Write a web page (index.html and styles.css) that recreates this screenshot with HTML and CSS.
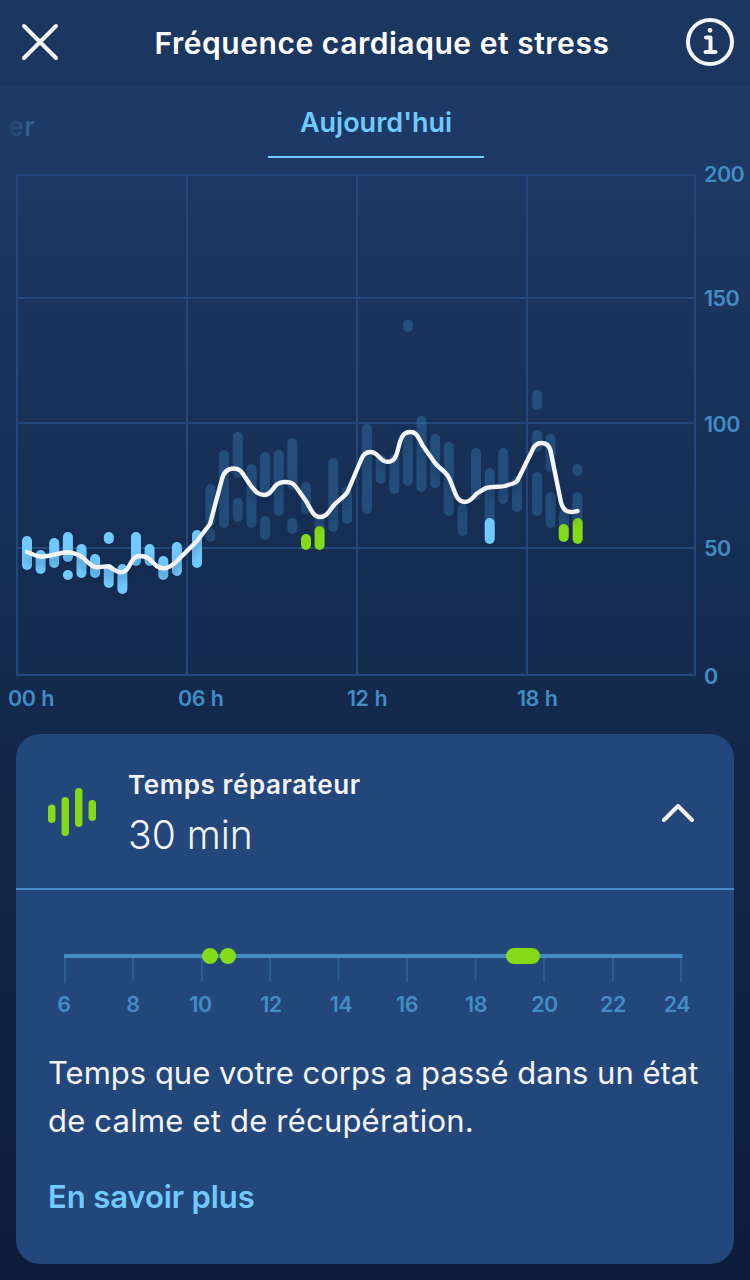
FILE: index.html
```
<!DOCTYPE html>
<html lang="fr">
<head>
    <meta charset="UTF-8">
    <meta name="viewport" content="width=device-width, initial-scale=1.0">
    <title>Fréquence cardiaque et stress</title>
    <link rel="stylesheet" href="styles.css">
</head>
<body>
    <header class="header">
        <button class="icon-button" aria-label="Fermer">
            <svg width="48" height="48" viewBox="0 0 48 48"><path class="icon-stroke" d="M12 8 L44 40 M44 8 L12 40"/></svg>
        </button>
        <h1 class="title">Fréquence cardiaque et stress</h1>
        <button class="icon-button" aria-label="Informations">
            <svg width="48" height="48" viewBox="0 0 48 48">
                <circle class="icon-stroke" cx="24" cy="24" r="22"/>
                <circle class="icon-dot" cx="24" cy="12.3" r="2.4"/>
                <path class="icon-stroke" d="M20 19.5 H24.5 V34 M19.5 34 H29.5"/>
            </svg>
        </button>
    </header>

    <nav class="tabs">
        <span class="tab-prev">er</span>
        <span class="tab active">Aujourd'hui</span>
    </nav>

    <svg class="chart" width="750" height="574" viewBox="0 160 750 574">
        <g class="grid">
            <path d="M17 175 H695 V675 H17 Z"/>
            <path d="M17 298 H695 M17 423 H695 M17 548 H695"/>
            <path d="M187 175 V675 M357 175 V675 M527 175 V675"/>
        </g>
        <g id="bars"></g>
        <path class="curve" d="M27 552 C32 554 37 556.7 42 556.7 C50 556.5 60 552.5 67.5 552.3 C73 552.5 77 554 82 557 C88 561 90 567 97 567.3 C101 567.3 104 566 108 566.5 C113 567.5 115 572.3 121 572.3 C131 572.3 129 556 140 556 C153 556 152 568.3 164 568.3 C169 568.3 173 565 177 561 L197 541 L210 524 L222 479 C224 471 228 468.5 234 468.5 C240 468.5 242 472 245 477 L251 486 C255 491 258 495 264 495 C274 495 272 482 284.5 482 C291 482 293 483 296 487 L306 501 C311 509 313 517 320 517 C327 517 329 511 334 505 C338 501 345 496 347.5 492 L361 460 C363 454 366 452 370.5 452 C379 452 379 461.8 387.500 461.8 C403 461.8 394 432 410.5 432 C418 432 419 440 423 446 L435 463 C440 469 446 472 448.5 477 C455 489 455 502 465 502 C472 502 474 494 480 491.5 L486 488 C494 486 500 487.5 505 486 C510 484 515 484 517.5 480.5 L532 451 C534 445 538 443 541.5 443 C546 443 550 446 551 453 L560.5 500 C562 509 566 512 571 512 C574 512 575 511.5 577.5 511"/>
        <g class="axis-text">
            <text x="704" y="182">200</text>
            <text x="704" y="306">150</text>
            <text x="704" y="432">100</text>
            <text x="704" y="556">50</text>
            <text x="704" y="684">0</text>
            <text x="8" y="706">00 h</text>
            <text x="178" y="706">06 h</text>
            <text x="347" y="706">12 h</text>
            <text x="517" y="706">18 h</text>
        </g>
    </svg>

    <section class="card">
        <div class="card-head">
            <svg class="card-icon" width="48" height="48" viewBox="0 0 48 48">
                <rect x="0" y="16.5" width="7.5" height="18.5" rx="3.75"/>
                <rect x="13.5" y="9" width="7.5" height="39" rx="3.75"/>
                <rect x="27" y="0" width="7.5" height="39" rx="3.75"/>
                <rect x="40.5" y="12" width="7.5" height="21" rx="3.75"/>
            </svg>
            <div class="card-label">
                <h2>Temps réparateur</h2>
                <p class="value">30 min</p>
            </div>
            <svg width="32" height="20" viewBox="0 0 32 20"><path class="icon-stroke" d="M2 18 L16 4 L30 18"/></svg>
        </div>
        <svg class="timeline" width="718" height="136" viewBox="16 890 718 136">
            <path class="ticks" d="M65 956 V983 M133 956 V981 M202 956 V982 M270 956 V982 M338.5 956 V981 M407 956 V982 M475.5 956 V981 M544 956 V982 M613 956 V982 M681 956 V982"/>
            <path class="track" d="M64 956 H682.5"/>
            <g class="recovery">
                <circle cx="210" cy="956" r="8"/>
                <circle cx="228" cy="956" r="8"/>
                <rect x="506" y="948" width="34" height="16" rx="8"/>
            </g>
            <g class="axis-text centered">
                <text x="64" y="1012">6</text>
                <text x="133" y="1012">8</text>
                <text x="200.5" y="1012">10</text>
                <text x="271" y="1012">12</text>
                <text x="341" y="1012">14</text>
                <text x="407" y="1012">16</text>
                <text x="476" y="1012">18</text>
                <text x="544.5" y="1012">20</text>
                <text x="613" y="1012">22</text>
                <text x="677" y="1012">24</text>
            </g>
        </svg>
        <div class="card-body">
            <p>Temps que votre corps a passé dans un état <span class="last-line">de calme et de récupération.</span></p>
            <a class="more" href="#">En savoir plus</a>
        </div>
    </section>

    <script src="chart.js"></script>
</body>
</html>
```
FILE: styles.css
```
* {
    box-sizing: border-box;
}

body {
    font-family: Inter, "Liberation Sans", sans-serif;
    margin: 0;
    width: 750px;
    height: 1280px;
    overflow: hidden;
    background: linear-gradient(#1f3d6b, #172f56 500px, #13284a 740px, #0c1d3a);
    color: #f4f4f6;
}

h1, h2, p {
    margin: 0;
}

/* Header */
.header {
    display: flex;
    align-items: center;
    justify-content: space-between;
    height: 86px;
    padding: 0 16px 2px 12px;
    background-color: #1b365f;
}

.icon-button {
    width: 48px;
    height: 48px;
    padding: 0;
    border: none;
    background: none;
}

.icon-stroke {
    fill: none;
    stroke: #f4f4f6;
    stroke-width: 4;
    stroke-linecap: round;
    stroke-linejoin: round;
}

.icon-dot {
    fill: #f4f4f6;
}

.title {
    font-size: 30px;
    font-weight: 600;
    letter-spacing: 0.54px;
    color: #fff;
    padding: 2px 0 0 18px;
}

/* Day tabs */
.tabs {
    display: grid;
    grid-template-columns: 268px 216px;
    height: 74px;
    font-size: 27px;
    font-weight: 600;
}

.tab-prev {
    padding: 24px 0 0 8px;
    background: linear-gradient(90deg, #1f4068 8px, #3a76a4 42px);
    background-clip: text;
    -webkit-background-clip: text;
    color: transparent;
}

.tab {
    height: 72px;
    padding-top: 20px;
    text-align: center;
    color: #70caff;
    border-bottom: 2px solid #70caff;
}

/* Heart rate chart */
.chart,
.timeline {
    display: block;
}

.grid path {
    fill: none;
    stroke: #24477c;
    stroke-width: 2;
}

.bar-rest {
    fill: #70caff;
}

.bar-active {
    fill: #3a83b8;
    fill-opacity: 0.37;
}

.bar-recovery {
    fill: #84da17;
}

.curve {
    fill: none;
    stroke: #f4f4f6;
    stroke-width: 4.4;
    stroke-linecap: round;
    stroke-linejoin: round;
    filter: drop-shadow(0 6px 4px rgba(16, 38, 70, 0.4));
}

.axis-text {
    font-size: 21.5px;
    font-weight: 600;
    letter-spacing: -0.5px;
    word-spacing: 1px;
    fill: #428dc5;
}

.centered {
    text-anchor: middle;
}

/* Card */
.card {
    height: 530px;
    margin: 0 16px;
    border-radius: 24px;
    background-color: #23477a;
}

.card-head {
    display: flex;
    align-items: center;
    height: 156px;
    padding: 2px 40px 0 32px;
    border-bottom: 2px solid #428dc5;
}

.card-icon {
    fill: #84da17;
}

.card-label {
    flex: 1;
    padding: 7px 0 0 32px;
}

.card-label h2 {
    font-size: 26px;
    font-weight: 600;
    line-height: 38px;
    letter-spacing: 0.6px;
}

.value {
    font-size: 39px;
    font-weight: 350;
    line-height: 61px;
}

.ticks {
    stroke: #2c5c92;
    stroke-width: 2;
}

.track {
    stroke: #428dc5;
    stroke-width: 4;
}

.recovery {
    fill: #84da17;
}

.card-body {
    padding: 23px 32px 0;
    font-size: 31px;
    line-height: 48px;
}

.last-line {
    letter-spacing: 0.2px;
}

.more {
    display: inline-block;
    margin-top: 28px;
    font-weight: 600;
    letter-spacing: -0.1px;
    color: #70caff;
    text-decoration: none;
}
```
FILE: chart.js
```
// [x center, top, bottom]
const bars = {
    active: [
        [210.5, 484, 526], [210.5, 528, 542], [224, 450, 528], [237.8, 432, 478], [237.8, 498, 522],
        [251.5, 464, 528], [265, 452, 496], [265, 516, 540], [278.7, 450, 516], [292.3, 438, 490],
        [292.3, 518, 534], [306, 482, 514], [319.6, 516, 540], [333.3, 458, 532], [347, 486, 524],
        [367, 424, 514], [380.6, 454, 484], [394.3, 454, 494], [407.9, 320, 332], [407.9, 430, 486],
        [421.5, 416, 492], [435.2, 434, 488], [448.8, 442, 516], [462.4, 504, 536], [476, 448, 500],
        [489.7, 468, 540], [503.3, 448, 504], [517, 476, 512], [537, 390, 410], [537, 430, 452],
        [537, 472, 516], [550.5, 434, 472], [550.5, 492, 528], [564, 510, 540], [577.5, 464, 476],
        [577.5, 492, 530]
    ],
    rest: [
        [27, 536, 570], [40.6, 550, 574], [54.2, 538, 568], [67.9, 532, 562], [67.9, 570, 580],
        [81.5, 544, 578], [95.1, 554, 578], [108.8, 532, 544], [108.8, 564, 588], [122.4, 564, 594],
        [136, 532, 566], [149.6, 544, 566], [163.3, 556, 580], [176.9, 542, 576], [197, 530, 568],
        [489.7, 518, 544]
    ],
    recovery: [[306, 534, 550], [319.6, 526, 550], [563.7, 524, 542], [577.7, 518, 544]]
};

const group = document.getElementById('bars');
for (const type in bars) {
    bars[type].forEach(function([x, top, bottom]) {
        const rect = document.createElementNS('http://www.w3.org/2000/svg', 'rect');
        rect.setAttribute('class', 'bar-' + type);
        rect.setAttribute('x', x - 5);
        rect.setAttribute('y', top);
        rect.setAttribute('width', 10);
        rect.setAttribute('height', bottom - top);
        rect.setAttribute('rx', 5);
        group.appendChild(rect);
    });
}
```
